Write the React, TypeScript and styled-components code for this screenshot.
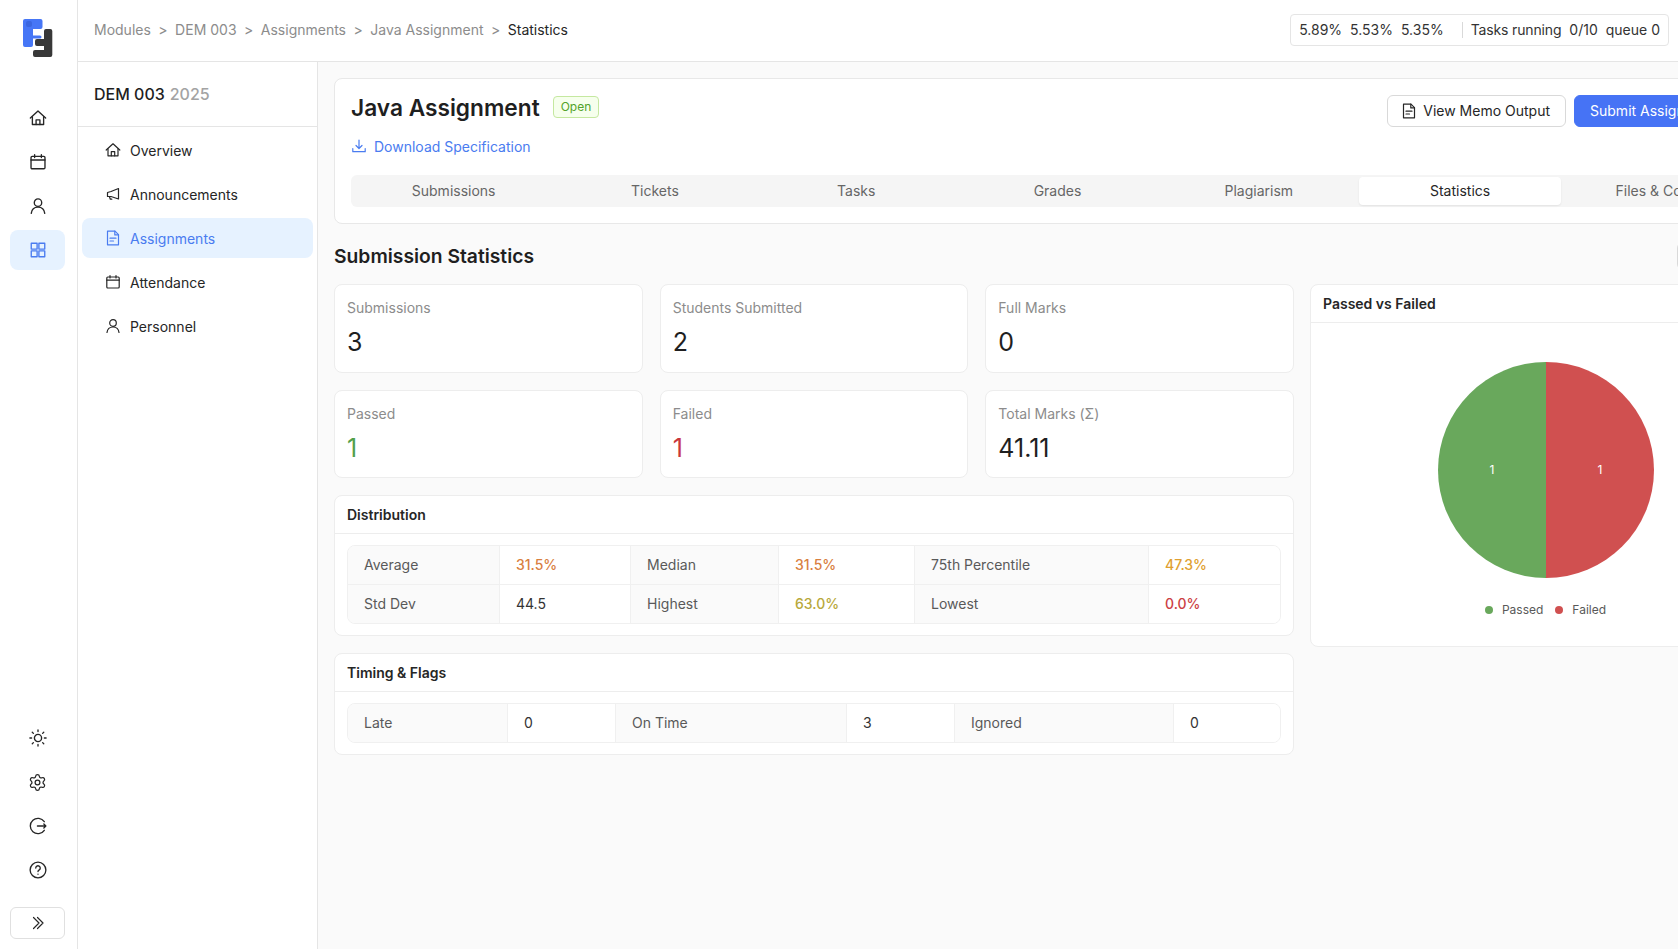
import React from "react";
import styled, { createGlobalStyle } from "styled-components";
import { Settings } from "lucide-react";

const Global = createGlobalStyle`
  html, body { margin: 0; padding: 0; height: 100%; overflow: hidden; }
  body { font-family: Inter, "Liberation Sans", sans-serif; font-size: 14px; color: #1f1f1f; background: #fafafa; }
  * { box-sizing: border-box; }
`;

const Shell = styled.div`display: flex; width: 1678px; height: 949px; overflow: hidden; background: #fafafa;`;
const Rail = styled.aside`
  width: 78px; flex: none; background: #fff; border-right: 1px solid #e5e5e5;
  display: flex; flex-direction: column; align-items: center; padding: 0 2px 10px 0;
`;
const LogoWrap = styled.div`height: 62px; padding-top: 14px; display: flex; align-items: center; justify-content: center; width: 100%; margin-bottom: 36px;`;
const RailList = styled.nav`display: flex; flex-direction: column; gap: 0px; width: 100%; align-items: center;`;
const RailSpacer = styled.div`flex: 1;`;
const RailItem = styled.div<{ $active?: boolean }>`
  width: 55px; height: 40px; margin-bottom: 4px; border-radius: 8px; display: flex; align-items: center; justify-content: center;
  background: ${p => (p.$active ? "#e6f2ff" : "transparent")};
  color: ${p => (p.$active ? "#4a7cf0" : "#262626")};
`;
const Collapse = styled.button`
  width: 55px; height: 32px; margin-top: 13px; border: 1px solid #e0e0e0; border-radius: 6px; background: #fff; color: #262626;
  display: flex; align-items: center; justify-content: center; padding: 0;
`;
const Column = styled.div`flex: 1; min-width: 0; display: flex; flex-direction: column;`;
const TopBar = styled.header`
  height: 62px; flex: none; background: #fff; border-bottom: 1px solid #e5e5e5;
  display: flex; align-items: center; justify-content: space-between; padding: 0 9px 1px 16px;
`;
const Crumbs = styled.div`display: flex; align-items: center; gap: 7.5px; color: #8c8c8c; margin-top: -1px;`;
const CrumbCurrent = styled.span`color: #262626;`;
const Status = styled.div`
  height: 32px; border: 1px solid #e5e5e5; border-radius: 4px; display: flex; align-items: center; padding: 0 8px 1px; gap: 8px; color: #333; background: #fff;
`;
const StatusDivider = styled.span`width: 1px; height: 16px; background: #d9d9d9; margin-left: 10px;`;
const TaskLabel = styled.span`letter-spacing: -0.15px;`;
const Body = styled.div`flex: 1; display: flex; min-height: 0;`;
const SubNav = styled.aside`width: 240px; flex: none; background: #fff; border-right: 1px solid #e5e5e5;`;
const SubHead = styled.div`height: 65px; border-bottom: 1px solid #e5e5e5; display: flex; align-items: center; padding: 0 16px; font-size: 16px; font-weight: 500; color: #1f1f1f; gap: 5px;`;
const Year = styled.span`color: #a3a3a3;`;
const SubList = styled.nav`padding: 3px 4px; display: flex; flex-direction: column; gap: 4px;`;
const SubItem = styled.div<{ $active?: boolean }>`
  height: 40px; border-radius: 8px; display: flex; align-items: center; gap: 9px; padding-left: 23px;
  background: ${p => (p.$active ? "#e6f2ff" : "transparent")};
  color: ${p => (p.$active ? "#4a7cf0" : "#262626")};
`;
const Main = styled.main`flex: 1; min-width: 0; overflow: hidden; padding: 16px;`;
const Inner = styled.div`width: 1447px; display: flex; flex-direction: column;`;
const HeaderCard = styled.section`
  background: #fff; border: 1px solid #e8e8e8; border-radius: 8px; height: 146px; padding: 14px 16px 0; position: relative;
`;
const TitleRow = styled.div`display: flex; align-items: center; gap: 13px; height: 30px;`;
const Title = styled.h1`margin: 0; font-size: 22.7px; line-height: 30px; font-weight: 600; color: #1f1f1f;`;
const Tag = styled.span`
  height: 22px; margin-top: -3px; padding: 0 7px; display: inline-flex; align-items: center; font-size: 12px; color: #52a32a; background: #f6ffed; border: 1px solid #c5e8a0; border-radius: 4px;
`;
const DownloadLink = styled.a`display: flex; align-items: center; gap: 7px; color: #4a7cf0; margin-top: 12px; height: 22px;`;
const Actions = styled.div`position: absolute; top: 16px; right: 46px; display: flex; gap: 8px;`;
const Btn = styled.button<{ $primary?: boolean }>`
  height: 32px; border-radius: 6px; padding: 0 15px 1px; display: flex; align-items: center; gap: 6px; font: inherit; white-space: nowrap;
  border: 1px solid ${p => (p.$primary ? "#4673f5" : "#d9d9d9")};
  background: ${p => (p.$primary ? "#4673f5" : "#fff")};
  color: ${p => (p.$primary ? "#fff" : "#262626")};
  svg { margin-left: -2px; }
`;
const Tabs = styled.div`
  display: grid; grid-template-columns: repeat(7, 1fr); margin-top: 18px; height: 32px; background: #f5f5f5; border-radius: 6px; padding: 2px;
`;
const Tab = styled.div<{ $active?: boolean }>`
  display: flex; align-items: center; justify-content: center; white-space: nowrap; border-radius: 4px; padding-bottom: 1px;
  color: ${p => (p.$active ? "#262626" : "#666")};
  background: ${p => (p.$active ? "#fff" : "transparent")};
  box-shadow: ${p => (p.$active ? "0 1px 2px rgba(0,0,0,.08)" : "none")};
`;
const SectionHead = styled.div`height: 60px; padding-top: 4px; display: flex; align-items: center; justify-content: space-between; margin-bottom: 0;`;
const H2 = styled.h2`margin: 0; font-size: 19.3px; font-weight: 600; color: #1f1f1f;`;
const GhostButton = styled.div`width: 104px; height: 28px; border: 1px solid #d9d9d9; border-radius: 6px; background: #fff;`;
const Split = styled.div`display: grid; grid-template-columns: 960px 471px; gap: 16px; align-items: start;`;
const LeftCol = styled.div`display: flex; flex-direction: column; gap: 17px;`;
const StatGrid = styled.div`display: grid; grid-template-columns: repeat(3, 1fr); gap: 17px 17px;`;
const Card = styled.div`background: #fff; border: 1px solid #ededed; border-radius: 8px;`;
const StatCard = styled(Card)`height: 88.5px; padding: 12px 12px;`;
const StatLabel = styled.div`color: #8c8c8c; line-height: 22px;`;
const StatValue = styled.div<{ $color?: string }>`font-size: 25px; line-height: 32px; margin-top: 7px; color: ${p => p.$color || "#1f1f1f"};`;
const CardHead = styled.div`height: 38px; border-bottom: 1px solid #ededed; display: flex; align-items: center; padding: 0 12px; font-weight: 600; color: #262626;`;
const CardBody = styled.div`padding: 11px 12px 11px;`;
const Table = styled.div<{ $cols: string }>`
  display: grid; grid-template-columns: ${p => p.$cols}; border: 1px solid #f0f0f0; border-radius: 8px; overflow: hidden;
`;
const Label = styled.div<{ $last?: boolean }>`
  height: ${p => (p.$last ? "38px" : "39px")}; background: #fafafa; color: #595959; display: flex; align-items: center; padding: 0 0 1px 16px;
  border-right: 1px solid #f0f0f0; border-bottom: ${p => (p.$last ? "none" : "1px solid #f0f0f0")};
`;
const Value = styled.div<{ $color?: string; $last?: boolean; $end?: boolean }>`
  height: ${p => (p.$last ? "38px" : "39px")}; background: #fff; display: flex; align-items: center; padding: 0 0 1px 16px;
  font-weight: ${p => (p.$color ? 500 : 400)};
  color: ${p => p.$color || "#333"}; border-right: ${p => (p.$end ? "none" : "1px solid #f0f0f0")}; border-bottom: ${p => (p.$last ? "none" : "1px solid #f0f0f0")};
`;
const ChartCard = styled(Card)`height: 363px; display: flex; flex-direction: column;`;
const ChartBody = styled.div`flex: 1; display: flex; flex-direction: column; align-items: center; padding-top: 39px;`;
const Legend = styled.div`display: flex; align-items: center; gap: 12px; margin-top: 24px; font-size: 12px; color: #595959; line-height: 16px;`;
const LegendItem = styled.span`display: inline-flex; align-items: center; gap: 9px;`;
const Dot = styled.i<{ $color: string }>`width: 8px; height: 8px; border-radius: 50%; background: ${p => p.$color};`;

const Ico = ({ children, size = 18, sw = 1.2 }: { children: React.ReactNode; size?: number; sw?: number }) => (
  <svg width={size} height={size} viewBox="0 0 16 16" fill="none" stroke="currentColor" strokeWidth={sw} strokeLinecap="round" strokeLinejoin="round">{children}</svg>
);
type IP = { size?: number };
const HomeI = (p: IP) => <Ico {...p}><path d="M1.2 8 8 1.8 14.8 8" /><path d="M3 6.8v7h10v-7" /><path d="M6.3 13.8V9.6h3.4v4.2" /></Ico>;
const CalI = (p: IP) => <Ico {...p}><rect x="1.8" y="3" width="12.4" height="11" rx="1" /><path d="M1.8 6.2h12.4M5 1.5V4M11 1.5V4" /></Ico>;
const UserI = (p: IP) => <Ico {...p}><circle cx="8" cy="5" r="3.3" /><path d="M2 14.5c.4-3.4 2.7-5.5 6-5.5s5.6 2.1 6 5.5" /></Ico>;
const GridI = (p: IP) => <Ico {...p}><rect x="2" y="2" width="5.2" height="5.2" /><rect x="8.8" y="2" width="5.2" height="5.2" /><rect x="2" y="8.8" width="5.2" height="5.2" /><rect x="8.8" y="8.8" width="5.2" height="5.2" /></Ico>;
const MegaI = (p: IP) => <Ico {...p}><path d="M13.5 2.5V13L6 10.5H2.5v-4L6 5.5z" /><path d="M4.5 10.8l.8 2.4h1.5" /></Ico>;
const DocI = (p: IP) => <Ico {...p}><path d="M2.5 1.2H10l3.5 3.500v10.100h-11z" /><path d="M9.800 1.200v3.700h3.700M5 8.200h6M5 11h3.500" /></Ico>;
const SunI = (p: IP) => <Ico {...p}><circle cx="8" cy="8" r="3.2" /><path d="M8 .8v1.5M8 13.700v1.500M.8 8h1.500M13.700 8h1.500M2.900 2.900l1 1M12.100 12.100l1 1M2.900 13.100l1-1M12.100 3.900l1-1" /></Ico>;
const LogoutI = (p: IP) => <Ico {...p}><path d="M13.600 4.200A6.800 6.800 0 1 0 13.600 11.800" /><path d="M7.500 8h7.500M13.200 6.300 15 8l-1.800 1.700" /></Ico>;
const HelpI = (p: IP) => <Ico {...p}><circle cx="8" cy="8" r="7" /><path d="M6 6.200a2 2 0 1 1 3.100 1.700c-.7.4-1.100.8-1.100 1.500" /><path d="M8 11.600v.1" /></Ico>;
const ChevI = () => <Ico size={16}><path d="M3.500 2.500 9 8l-5.500 5.500M7.500 2.500 13 8l-5.500 5.500" /></Ico>;
const DownI = () => <Ico size={16}><path d="M8 2v8M5 7.500 8 10.500l3-3M1.800 10.500v3.200h12.400v-3.200" /></Ico>;

const Logo = () => (
  <svg width="30" height="38" viewBox="0 0 30 38">
    <path d="M21 12a2 2 0 0 1 2-2h4.300a2 2 0 0 1 2 2v24a2 2 0 0 1-2 2H12a2 2 0 0 1-2-2v-3a2 2 0 0 1 2-2h9v-4h-7a2 2 0 0 1-2-2v-3a2 2 0 0 1 2-2h7z" fill="#383838" />
    <path d="M2 0h15.500a2 2 0 0 1 2 2v6a2 2 0 0 1-2 2H10v6.500h7a1.500 1.500 0 0 1 0 3h-7V26a2 2 0 0 1-2 2H2a2 2 0 0 1-2-2V2a2 2 0 0 1 2-2z" fill="#4676f6" />
    <rect x="3" y="2" width="6" height="6" rx="2" fill="#3a66e0" />
  </svg>
);

const Row = ({ label, value, color, last, end }: { label: string; value: string; color?: string; last?: boolean; end?: boolean }) => (
  <>
    <Label $last={last}>{label}</Label>
    <Value $color={color} $last={last} $end={end}>{value}</Value>
  </>
);

const stats: { label: string; value: string; color?: string }[] = [
  { label: "Submissions", value: "3" },
  { label: "Students Submitted", value: "2" },
  { label: "Full Marks", value: "0" },
  { label: "Passed", value: "1", color: "#52a04a" },
  { label: "Failed", value: "1", color: "#c9373c" },
  { label: "Total Marks (Σ)", value: "41.11" },
];

const tabs = ["Submissions", "Tickets", "Tasks", "Grades", "Plagiarism", "Statistics", "Files & Config"];

export default function App() {
  return (
    <Shell>
      <Global />
      <Rail>
        <LogoWrap><Logo /></LogoWrap>
        <RailList>
          <RailItem><HomeI /></RailItem>
          <RailItem><CalI /></RailItem>
          <RailItem><UserI /></RailItem>
          <RailItem $active><GridI /></RailItem>
        </RailList>
        <RailSpacer />
        <RailList>
          <RailItem><SunI /></RailItem>
          <RailItem><Settings size={19} strokeWidth={1.6} /></RailItem>
          <RailItem><LogoutI /></RailItem>
          <RailItem><HelpI /></RailItem>
        </RailList>
        <Collapse><ChevI /></Collapse>
      </Rail>
      <Column>
        <TopBar>
          <Crumbs>
            <span>Modules</span><span>&gt;</span><span>DEM 003</span><span>&gt;</span><span>Assignments</span><span>&gt;</span><span>Java Assignment</span><span>&gt;</span><CrumbCurrent>Statistics</CrumbCurrent>
          </Crumbs>
          <Status>
            <span>5.89%</span><span>5.53%</span><span>5.35%</span><StatusDivider /><TaskLabel>Tasks running</TaskLabel><span>0/10</span><span>queue 0</span>
          </Status>
        </TopBar>
        <Body>
          <SubNav>
            <SubHead>DEM 003 <Year>2025</Year></SubHead>
            <SubList>
              <SubItem><HomeI size={16} />Overview</SubItem>
              <SubItem><MegaI size={16} />Announcements</SubItem>
              <SubItem $active><DocI size={16} />Assignments</SubItem>
              <SubItem><CalI size={16} />Attendance</SubItem>
              <SubItem><UserI size={16} />Personnel</SubItem>
            </SubList>
          </SubNav>
          <Main>
            <Inner>
              <HeaderCard>
                <TitleRow><Title>Java Assignment</Title><Tag>Open</Tag></TitleRow>
                <DownloadLink><DownI />Download Specification</DownloadLink>
                <Actions>
                  <Btn><DocI size={16} />View Memo Output</Btn>
                  <Btn $primary>Submit Assignment</Btn>
                </Actions>
                <Tabs>{tabs.map(t => <Tab key={t} $active={t === "Statistics"}>{t}</Tab>)}</Tabs>
              </HeaderCard>
              <SectionHead><H2>Submission Statistics</H2><GhostButton /></SectionHead>
              <Split>
                <LeftCol>
                  <StatGrid>
                    {stats.map(s => (
                      <StatCard key={s.label}>
                        <StatLabel>{s.label}</StatLabel>
                        <StatValue $color={s.color}>{s.value}</StatValue>
                      </StatCard>
                    ))}
                  </StatGrid>
                  <Card>
                    <CardHead>Distribution</CardHead>
                    <CardBody>
                      <Table $cols="152px 131px 148px 136px 234px 1fr">
                        <Row label="Average" value="31.5%" color="#d9803f" />
                        <Row label="Median" value="31.5%" color="#d9803f" />
                        <Row label="75th Percentile" value="47.3%" color="#e0a030" end />
                        <Row label="Std Dev" value="44.5" last />
                        <Row label="Highest" value="63.0%" color="#b8a83a" last />
                        <Row label="Lowest" value="0.0%" color="#cc3f45" last end />
                      </Table>
                    </CardBody>
                  </Card>
                  <Card>
                    <CardHead>Timing &amp; Flags</CardHead>
                    <CardBody>
                      <Table $cols="160px 108px 231px 108px 219px 1fr">
                        <Row label="Late" value="0" last />
                        <Row label="On Time" value="3" last />
                        <Row label="Ignored" value="0" last end />
                      </Table>
                    </CardBody>
                  </Card>
                </LeftCol>
                <ChartCard>
                  <CardHead>Passed vs Failed</CardHead>
                  <ChartBody>
                    <svg width="216" height="216" viewBox="0 0 216 216">
                      <path d="M108 0a108 108 0 0 0 0 216z" fill="#69a85c" />
                      <path d="M108 0a108 108 0 0 1 0 216z" fill="#d05050" />
                      <text x="54" y="112" fill="#fff" fontSize="12" textAnchor="middle" fontFamily="Inter, sans-serif">1</text>
                      <text x="162" y="112" fill="#fff" fontSize="12" textAnchor="middle" fontFamily="Inter, sans-serif">1</text>
                    </svg>
                    <Legend>
                      <LegendItem><Dot $color="#69a85c" />Passed</LegendItem>
                      <LegendItem><Dot $color="#d05050" />Failed</LegendItem>
                    </Legend>
                  </ChartBody>
                </ChartCard>
              </Split>
            </Inner>
          </Main>
        </Body>
      </Column>
    </Shell>
  );
}
